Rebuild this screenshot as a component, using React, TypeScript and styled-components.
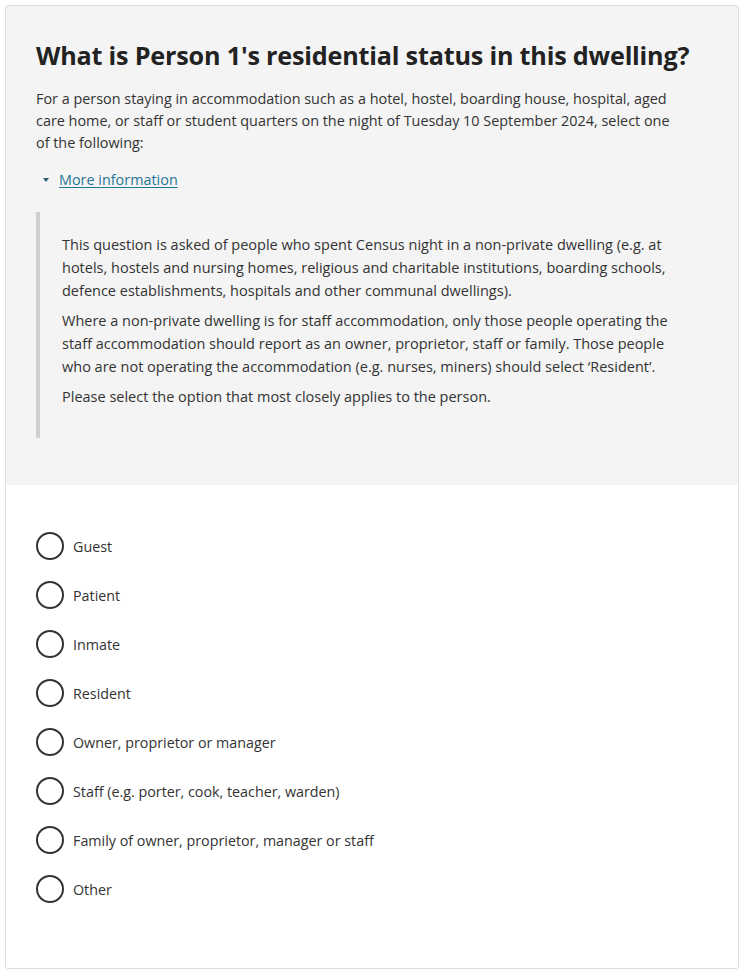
import React from "react";
import styled, { createGlobalStyle } from "styled-components";

const Global = createGlobalStyle`
  html, body { margin: 0; padding: 0; background: #ffffff; }
  body { font-family: "Open Sans", "Liberation Sans", sans-serif; color: #333; }
`;

const Page = styled.div`
  padding: 5px 6px 5px 5px;
`;

const Card = styled.div`
  border: 1px solid #dedede;
  border-radius: 3px;
  height: 962px;
  overflow: hidden;
  background: #fff;
`;

const Intro = styled.section`
  background: #f4f4f4;
  padding: 33px 30px 47px 30px;
`;

const Title = styled.h1`
  margin: 0 0 17px 0;
  font-size: 25.2px;
  line-height: 32px;
  font-weight: 700;
  letter-spacing: -0.2px;
  color: #222;
`;

const Lead = styled.p`
  margin: 0;
  font-size: 14.4px;
  line-height: 22px;
  color: #333;
`;

const Toggle = styled.div`
  margin: 15px 0 0 7px;
  display: flex;
  align-items: center;
  gap: 10px;
  font-size: 14.4px;
  line-height: 22px;
`;

const Caret = styled.span`
  width: 0;
  height: 0;
  border-left: 3.5px solid transparent;
  border-right: 3.5px solid transparent;
  border-top: 4px solid #2a5f75;
`;

const Link = styled.a`
  color: #2a7696;
  text-decoration: underline;
  text-underline-offset: 2px;
`;

const Note = styled.blockquote`
  margin: 21px 0 0 0;
  border-left: 4px solid #cfcfcf;
  padding: 21px 20px 30px 22px;
`;

const NotePara = styled.p`
  margin: 0 0 7px 0;
  font-size: 14.5px;
  line-height: 23px;
  color: #333;
  &:last-child { margin-bottom: 0; }
`;

const Options = styled.fieldset`
  border: 0;
  margin: 0;
  padding: 47px 30px 0 30px;
  display: flex;
  flex-direction: column;
  gap: 21px;
`;

const Option = styled.label`
  display: flex;
  align-items: center;
  gap: 9px;
  font-size: 14.3px;
  color: #333;
  cursor: pointer;
`;

const Circle = styled.span`
  box-sizing: border-box;
  width: 28px;
  height: 28px;
  border-radius: 50%;
  border: 2px solid #333;
  flex: none;
`;

const options = [
  "Guest",
  "Patient",
  "Inmate",
  "Resident",
  "Owner, proprietor or manager",
  "Staff (e.g. porter, cook, teacher, warden)",
  "Family of owner, proprietor, manager or staff",
  "Other",
];

export default function App() {
  return (
    <>
      <Global />
      <Page>
        <Card>
          <Intro>
            <Title>What is Person 1's residential status in this dwelling?</Title>
            <Lead>
              For a person staying in accommodation such as a hotel, hostel, boarding house, hospital, aged
              <br />
              care home, or staff or student quarters on the night of Tuesday 10 September 2024, select one
              <br />
              of the following:
            </Lead>
            <Toggle>
              <Caret />
              <Link href="#">More information</Link>
            </Toggle>
            <Note>
              <NotePara>
                This question is asked of people who spent Census night in a non-private dwelling (e.g. at
                <br />
                hotels, hostels and nursing homes, religious and charitable institutions, boarding schools,
                <br />
                defence establishments, hospitals and other communal dwellings).
              </NotePara>
              <NotePara>
                Where a non-private dwelling is for staff accommodation, only those people operating the
                <br />
                staff accommodation should report as an owner, proprietor, staff or family. Those people
                <br />
                who are not operating the accommodation (e.g. nurses, miners) should select ‘Resident’.
              </NotePara>
              <NotePara>Please select the option that most closely applies to the person.</NotePara>
            </Note>
          </Intro>
          <Options>
            {options.map((o) => (
              <Option key={o}>
                <Circle />
                {o}
              </Option>
            ))}
          </Options>
        </Card>
      </Page>
    </>
  );
}
